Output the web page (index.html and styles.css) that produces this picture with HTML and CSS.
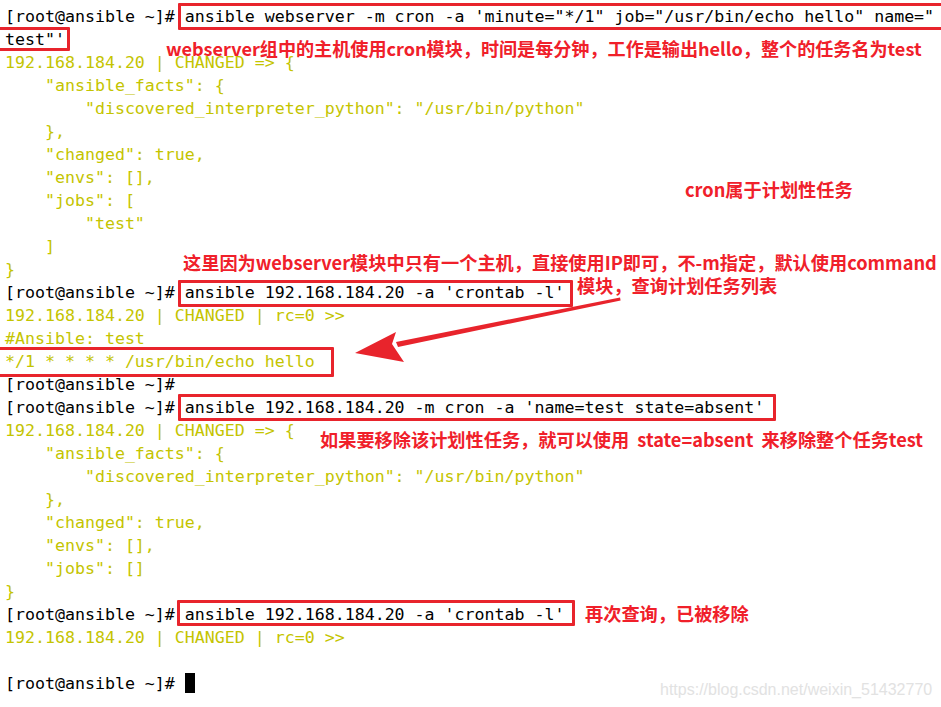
FILE: index.html
```html
<!DOCTYPE html>
<html lang="zh-CN">
<head>
<meta charset="utf-8">
<title>ansible cron</title>
<link rel="stylesheet" href="styles.css">
</head>
<body>
<div class="screen">
  <div class="term">
    <div class="ln">[root@ansible ~]# ansible webserver -m cron -a 'minute="*/1" job="/usr/bin/echo hello" name="</div>
    <div class="ln">test"'</div>
    <div class="ln y">192.168.184.20 | CHANGED =&gt; {</div>
    <div class="ln y">    "ansible_facts": {</div>
    <div class="ln y">        "discovered_interpreter_python": "/usr/bin/python"</div>
    <div class="ln y">    },</div>
    <div class="ln y">    "changed": true,</div>
    <div class="ln y">    "envs": [],</div>
    <div class="ln y">    "jobs": [</div>
    <div class="ln y">        "test"</div>
    <div class="ln y">    ]</div>
    <div class="ln y">}</div>
    <div class="ln">[root@ansible ~]# ansible 192.168.184.20 -a 'crontab -l'</div>
    <div class="ln y">192.168.184.20 | CHANGED | rc=0 &gt;&gt;</div>
    <div class="ln y">#Ansible: test</div>
    <div class="ln y">*/1 * * * * /usr/bin/echo hello</div>
    <div class="ln">[root@ansible ~]#</div>
    <div class="ln">[root@ansible ~]# ansible 192.168.184.20 -m cron -a 'name=test state=absent'</div>
    <div class="ln y">192.168.184.20 | CHANGED =&gt; {</div>
    <div class="ln y">    "ansible_facts": {</div>
    <div class="ln y">        "discovered_interpreter_python": "/usr/bin/python"</div>
    <div class="ln y">    },</div>
    <div class="ln y">    "changed": true,</div>
    <div class="ln y">    "envs": [],</div>
    <div class="ln y">    "jobs": []</div>
    <div class="ln y">}</div>
    <div class="ln">[root@ansible ~]# ansible 192.168.184.20 -a 'crontab -l'</div>
    <div class="ln y">192.168.184.20 | CHANGED | rc=0 &gt;&gt;</div>
    <div class="ln"> </div>
    <div class="ln">[root@ansible ~]# <span class="cursor"></span></div>
  </div>

  <div class="box b1"></div>
  <div class="box b2"></div>
  <div class="box b3"></div>
  <div class="box b4"></div>
  <div class="box b5"></div>
  <div class="box b6"></div>

  <svg class="arrow" width="941" height="707" viewBox="0 0 941 707">
    <polygon points="620,297.5 620.6,300.5 398,347 396,342" fill="#e8242c"/>
    <polygon points="355,353 396,332 392,344 404,362" fill="#e8242c"/>
  </svg>

  <div class="note n1">webserver组中的主机使用cron模块，时间是每分钟，工作是输出hello，整个的任务名为test</div>
  <div class="note n2">cron属于计划性任务</div>
  <div class="note n3">这里因为webserver模块中只有一个主机，直接使用IP即可，不-m指定，默认使用command</div>
  <div class="note n4">模块，查询计划任务列表</div>
  <div class="note n5">如果要移除该计划性任务，就可以使用 state=absent 来移除整个任务test</div>
  <div class="note n6">再次查询，已被移除</div>

  <div class="watermark">https://blog.csdn.net/weixin_51432770</div>
</div>
</body>
</html>
```

FILE: styles.css
```css
html, body {
  margin: 0;
  padding: 0;
  background: #ffffff;
}

.screen {
  position: relative;
  width: 941px;
  height: 707px;
  overflow: hidden;
  background: #ffffff;
}

.term {
  padding: 5px 0 0 5px;
  font-family: "DejaVu Sans Mono", "Liberation Mono", monospace;
  font-size: 16.6px;
  line-height: 23px;
  color: #000000;
}

.ln {
  height: 23px;
  white-space: pre;
}

.y {
  color: #c4c400;
}

.cursor {
  display: inline-block;
  width: 10px;
  height: 20px;
  background: #000000;
  vertical-align: -4px;
}

.box {
  position: absolute;
  box-sizing: border-box;
  border: 3px solid #e8242c;
  border-radius: 1px;
}

.b1 { left: 178px; top: 3px; width: 766px; height: 27px; }
.b2 { left: -3px; top: 27px; width: 73px; height: 24px; }
.b3 { left: 178px; top: 280px; width: 395px; height: 27px; }
.b4 { left: -3px; top: 347px; width: 337px; height: 30px; }
.b5 { left: 178px; top: 394px; width: 598px; height: 27px; }
.b6 { left: 177px; top: 600px; width: 398px; height: 26px; }

.arrow {
  position: absolute;
  left: 0;
  top: 0;
}

.note {
  position: absolute;
  font-family: "Noto Sans CJK SC", "Noto Sans", sans-serif;
  font-weight: 700;
  font-size: 18.2px;
  line-height: 24px;
  color: #f0202a;
  white-space: nowrap;
}

.n1 { left: 166px; top: 36px; font-size: 18.1px; }
.n2 { left: 685px; top: 177px; }
.n3 { left: 183px; top: 250px; }
.n4 { left: 577px; top: 273px; }
.n5 { left: 320px; top: 427px; word-spacing: 4px; }
.n6 { left: 585px; top: 601px; }

.watermark {
  position: absolute;
  left: 660px;
  top: 679px;
  font-family: "Liberation Sans", Arial, sans-serif;
  font-size: 16px;
  line-height: 22px;
  color: #e2e2e2;
  white-space: nowrap;
}
```
